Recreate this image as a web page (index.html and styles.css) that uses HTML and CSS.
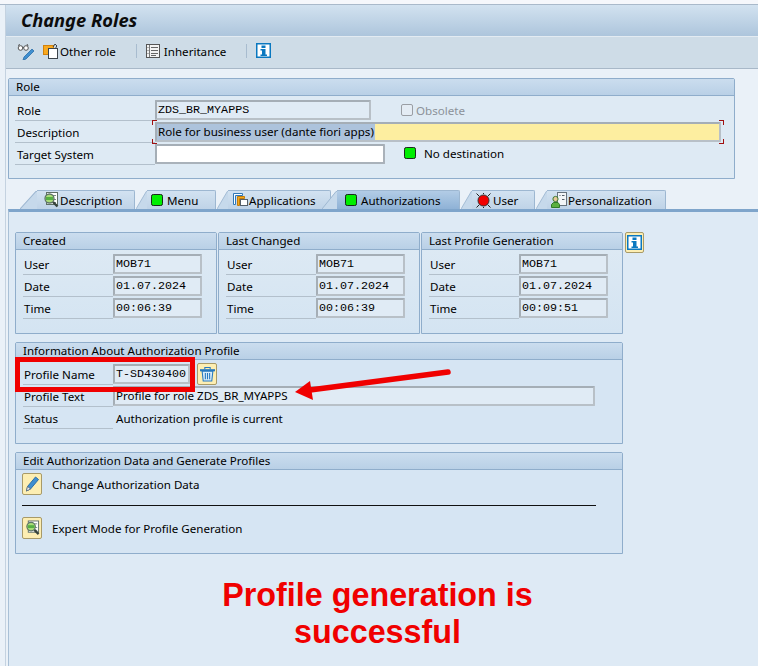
FILE: index.html
```html
<!DOCTYPE html>
<html lang="en">
<head>
	<meta charset="utf-8">
	<title>Change Roles</title>
	<link rel="stylesheet" href="styles.css">
</head>
<body>
<svg class="defs" width="0" height="0">
	<symbol id="i-info" viewBox="0 0 15 15">
		<rect x="0.750" y="0.750" width="13.500" height="13.500" fill="#fff" stroke="#0a78c0" stroke-width="1.500"/>
		<rect x="5.500" y="2.500" width="4" height="2.500" fill="#0a78c0"/>
		<path d="M4.500 6h5v5.500h1.500v1.500h-6.500v-1.500h1.500v-4h-1.500z" fill="#0a78c0"/>
	</symbol>
	<symbol id="i-led-green" viewBox="0 0 13 13">
		<rect x="0.500" y="0.500" width="12" height="12" rx="2" fill="#00ee00" stroke="#111"/>
	</symbol>
	<symbol id="i-led-red" viewBox="0 0 15 15">
		<path d="M0.500 0.500l3 3M14.500 0.500l-3 3M0.500 14.500l3-3M14.500 14.500l-3-3M7.500 0v1M7.500 14v1" stroke="#222" fill="none"/>
		<circle cx="7.500" cy="7.500" r="5.500" fill="#f00000" stroke="#333"/>
	</symbol>
	<symbol id="i-search-doc" viewBox="0 0 16 16">
		<rect x="3.500" y="0.500" width="11" height="12" fill="#fff" stroke="#5d6f66"/>
		<path d="M5 7.500h8M10 3.500h3M11 10.500h2" stroke="#7b8d84"/>
		<circle cx="6.500" cy="6.500" r="4.500" fill="#a8dc78" stroke="#5e7466" stroke-width="1.300"/>
		<rect x="3" y="5" width="7" height="3" fill="#55b043"/>
		<path d="M10 10l4.500 4.500" stroke="#37443d" stroke-width="2.400"/>
	</symbol>
	<symbol id="i-apps" viewBox="0 0 16 16">
		<path d="M1.500 1.500h9v2h-7v9h-2z" fill="#fff" stroke="#2f78b8"/>
		<path d="M5.500 4.500h7v2h-5v7h-2z" fill="#f5a81c" stroke="#c07c0c"/>
		<rect x="8.500" y="7.500" width="7" height="6" fill="#fff" stroke="#55606a"/>
	</symbol>
	<symbol id="i-person" viewBox="0 0 16 16">
		<rect x="6.500" y="0.500" width="9" height="13" fill="#f2f5f7" stroke="#66727c"/>
		<path d="M11 3.500h2.500M11 7.500h2.500M8.500 3.500h1" stroke="#55606a"/>
		<circle cx="4.500" cy="7" r="2.600" fill="#e8c99a" stroke="#3d7a2e"/>
		<path d="M0.500 15.500v-3l2-2h4.500l1.500 2v3z" fill="#5bb03f" stroke="#2f7a26"/>
	</symbol>
	<symbol id="i-glasses" viewBox="0 0 18 17">
		<circle cx="3.500" cy="5" r="2.300" fill="#fff" stroke="#555"/>
		<circle cx="9" cy="5" r="2.300" fill="#fff" stroke="#555"/>
		<path d="M1.500 3l1-2M11 3l-1-2M5.800 4.500h1" stroke="#555" fill="none"/>
		<path d="M7 14l8-8 2 2-8 8-3 1z" fill="#3f8fd0" stroke="#2c6ea8" stroke-width="0.800"/>
	</symbol>
	<symbol id="i-other" viewBox="0 0 16 16">
		<rect x="0.500" y="2.500" width="10" height="9" fill="#f9a91e" stroke="#d2820c"/>
		<rect x="5.500" y="5.500" width="9" height="10" fill="#fff" stroke="#3c444b"/>
		<path d="M10 4l2-3 2 2-1 1v2" fill="none" stroke="#3c444b"/>
	</symbol>
	<symbol id="i-list" viewBox="0 0 14 14">
		<rect x="0.500" y="0.500" width="13" height="13" fill="#f3f3f3" stroke="#555"/>
		<path d="M3.500 1v12" stroke="#777"/>
		<path d="M1.500 3.500h1M1.500 6.500h1M1.500 9.500h1M5 3.500h7M5 6.500h7M5 9.500h7M5 11.500h5" stroke="#666"/>
	</symbol>
	<symbol id="i-trash" viewBox="0 0 14 14">
		<path d="M0 3.500h14" stroke="#2679bf" stroke-width="2"/>
		<path d="M4.500 2.500v-1.500h5v1.500" fill="none" stroke="#2679bf"/>
		<path d="M2 4.500l1 9h8l1-9z" fill="#d8ecf8" stroke="#2679bf"/>
		<path d="M5 6v6M7 6v6M9 6v6" stroke="#2679bf"/>
	</symbol>
	<symbol id="i-pencil" viewBox="0 0 14 16">
		<path d="M1 15l1-4.500 8-9.500 3 2.500-8 9.500z" fill="#3f8fd0" stroke="#2c6ea8"/>
		<path d="M1 15l1-4.500 3 2.500z" fill="#e9edf0" stroke="#555" stroke-width="0.600"/>
	</symbol>
	<symbol id="slant" viewBox="0 0 16 18" preserveAspectRatio="none">
		<path d="M0 18L15 0h1v18z" class="slant-fill"/>
		<path d="M0 18L15 0.500h1" fill="none" stroke="#9db7d1"/>
	</symbol>
</svg>

<div class="top-strip"></div>
<div class="screen">
	<div class="title-bar">Change Roles</div>

	<div class="toolbar">
		<svg class="icon tb-glasses"><use href="#i-glasses"/></svg>
		<svg class="icon tb-other"><use href="#i-other"/></svg>
		<span class="tb-text">Other role</span>
		<span class="tb-sep"></span>
		<svg class="icon tb-list"><use href="#i-list"/></svg>
		<span class="tb-text">Inheritance</span>
		<span class="tb-sep"></span>
		<svg class="icon tb-info"><use href="#i-info"/></svg>
	</div>

	<div class="group role-group">
		<div class="group-head">Role</div>
		<div class="group-body">
			<div class="row">
				<span class="label">Role</span>
				<span class="field mono role-field">ZDS_BR_MYAPPS</span>
				<span class="checkbox"></span>
				<span class="muted">Obsolete</span>
			</div>
			<div class="row">
				<span class="label">Description</span>
				<span class="field desc-field"><span class="selected">Role for business user (dante fiori apps)</span></span>
			</div>
			<div class="row">
				<span class="label">Target System</span>
				<span class="field target-field"></span>
				<svg class="icon led"><use href="#i-led-green"/></svg>
				<span class="dest">No destination</span>
			</div>
		</div>
	</div>

	<div class="tabs">
		<div class="tab tab-first"><svg class="slant"><use href="#slant"/></svg><div class="tab-body t-desc"><svg class="icon tab-icon"><use href="#i-search-doc"/></svg>Description</div></div>
		<div class="tab"><svg class="slant"><use href="#slant"/></svg><div class="tab-body t-menu"><svg class="icon tab-led"><use href="#i-led-green"/></svg>Menu</div></div>
		<div class="tab"><svg class="slant"><use href="#slant"/></svg><div class="tab-body t-apps"><svg class="icon tab-icon"><use href="#i-apps"/></svg>Applications</div></div>
		<div class="tab active"><svg class="slant"><use href="#slant"/></svg><div class="tab-body t-auth"><svg class="icon tab-led"><use href="#i-led-green"/></svg>Authorizations</div></div>
		<div class="tab"><svg class="slant"><use href="#slant"/></svg><div class="tab-body t-user"><svg class="icon tab-red"><use href="#i-led-red"/></svg>User</div></div>
		<div class="tab"><svg class="slant"><use href="#slant"/></svg><div class="tab-body t-pers"><svg class="icon tab-icon"><use href="#i-person"/></svg>Personalization</div></div>
	</div>

	<div class="tab-panel">
		<div class="stamp-row">
			<div class="group stamp">
				<div class="group-head">Created</div>
				<div class="group-body">
					<div class="row"><span class="label">User</span><span class="field mono short">MOB71</span></div>
					<div class="row"><span class="label">Date</span><span class="field mono short">01.07.2024</span></div>
					<div class="row"><span class="label">Time</span><span class="field mono short">00:06:39</span></div>
				</div>
			</div>
			<div class="group stamp">
				<div class="group-head">Last Changed</div>
				<div class="group-body">
					<div class="row"><span class="label">User</span><span class="field mono short">MOB71</span></div>
					<div class="row"><span class="label">Date</span><span class="field mono short">01.07.2024</span></div>
					<div class="row"><span class="label">Time</span><span class="field mono short">00:06:39</span></div>
				</div>
			</div>
			<div class="group stamp">
				<div class="group-head">Last Profile Generation</div>
				<div class="group-body">
					<div class="row"><span class="label">User</span><span class="field mono short">MOB71</span></div>
					<div class="row"><span class="label">Date</span><span class="field mono short">01.07.2024</span></div>
					<div class="row"><span class="label">Time</span><span class="field mono short">00:09:51</span></div>
				</div>
			</div>
			<span class="btn info-btn"><svg class="icon btn-info-icon"><use href="#i-info"/></svg></span>
		</div>

		<div class="group wide info-group">
			<div class="group-head">Information About Authorization Profile</div>
			<div class="group-body">
				<div class="row">
					<span class="label">Profile Name</span>
					<span class="field mono name-field">T-SD430400</span>
					<span class="btn trash-btn"><svg class="icon btn-icon"><use href="#i-trash"/></svg></span>
				</div>
				<div class="row"><span class="label">Profile Text</span><span class="field text-field">Profile for role ZDS_BR_MYAPPS</span></div>
				<div class="row"><span class="label">Status</span><span class="plain">Authorization profile is current</span></div>
			</div>
		</div>

		<div class="group wide edit-group">
			<div class="group-head">Edit Authorization Data and Generate Profiles</div>
			<div class="action first-action">
				<span class="btn"><svg class="icon btn-icon"><use href="#i-pencil"/></svg></span>
				<span class="action-text">Change Authorization Data</span>
			</div>
			<div class="rule"></div>
			<div class="action">
				<span class="btn"><svg class="icon btn-icon"><use href="#i-search-doc"/></svg></span>
				<span class="action-text">Expert Mode for Profile Generation</span>
			</div>
		</div>

		<div class="note">Profile generation is<br>successful</div>
	</div>
</div>

<!-- annotations drawn over the screen -->
<span class="corner c-tl"></span><span class="corner c-bl"></span><span class="corner c-tr"></span><span class="corner c-br"></span>
<div class="red-box"></div>
<svg class="arrow" width="170" height="40" viewBox="0 0 170 40">
	<path d="M156 7L18 25" stroke="#f00000" stroke-width="5.500" stroke-linecap="round"/>
	<path d="M3 27L18 16L21 35z" fill="#f00000"/>
</svg>
</body>
</html>
```

FILE: styles.css
```css
* {
	box-sizing: border-box;
}
html, body {
	margin: 0;
	height: 100%;
}
body {
	width: 758px;
	height: 666px;
	overflow: hidden;
	position: relative;
	background: #eaf1f8;
	color: #000;
	font: 11.6px "Noto Sans", "Liberation Sans", sans-serif;
}
.defs {
	position: absolute;
}
.icon {
	display: block;
	flex: none;
}
.mono {
	font-family: "Liberation Mono", monospace;
	font-size: 11.7px;
}

.top-strip {
	height: 5px;
	background: #f5f7fb;
	border-bottom: 1px solid #a9b9ca;
}
.screen {
	margin-left: 5px;
	border-left: 1px solid #c4d2e0;
}
.title-bar {
	height: 31px;
	padding: 0 0 3px 15px;
	display: flex;
	align-items: center;
	background: linear-gradient(#d2e2f0, #adc5dc);
	font: italic bold 18.300px "Noto Sans", "Liberation Sans", sans-serif;
	color: #0c0c0c;
}
.toolbar {
	height: 33px;
	display: flex;
	align-items: center;
	padding: 0 0 3px 11px;
	background: #cedce7;
	border-top: 1px solid #e3ebf2;
	border-bottom: 1px solid #a8b8c8;
}
.tb-glasses {
	width: 18px;
	height: 17px;
}
.tb-other {
	width: 16px;
	height: 16px;
	margin-left: 8px;
}
.tb-text {
	margin-left: 1px;
}
.tb-sep {
	width: 1px;
	height: 14px;
	background: #a8bccf;
	margin: 0 9px 0 20px;
}
.tb-list {
	width: 14px;
	height: 14px;
	margin-right: 3px;
}
.tb-info {
	width: 15px;
	height: 15px;
	margin-top: -2px;
}

.group {
	background: #deeaf4;
	border: 1px solid #8fadcb;
	border-radius: 2px 2px 0 0;
}
.group-head {
	height: 17px;
	padding-left: 7px;
	line-height: 16px;
	background: linear-gradient(#cbddee, #b9d0e6);
	border-bottom: 1px solid #8fadcb;
	white-space: nowrap;
}
.row {
	height: 22px;
	display: flex;
	align-items: flex-start;
}
.label {
	border-bottom: 1px solid #b3c0cc;
	height: 21px;
	line-height: 21px;
	flex: none;
}
.field {
	height: 20px;
	flex: none;
	padding-left: 1px;
	line-height: 16px;
	white-space: nowrap;
	background: #e0ebf5;
	border: 2px solid #a5aeb6;
	border-right-color: #b8c0c7;
	border-bottom-color: #b8c0c7;
	border-radius: 1px;
}

.role-group {
	width: 727px;
	height: 101px;
	margin: 9px 0 0 2px;
}
.role-group .group-body {
	padding: 4px 0 0 6px;
}
.role-group .label {
	width: 140px;
	padding-left: 2px;
}
.role-field {
	width: 216px;
}
.checkbox {
	width: 12px;
	height: 12px;
	margin: 4px 3px 0 30px;
	border: 1px solid #9a9ea4;
	border-radius: 2px;
	background: #e4ecf4;
}
.muted {
	color: #8c9299;
	line-height: 21px;
}
.desc-field {
	width: 566px;
	background: #fdeea0;
	padding-left: 0;
}
.selected {
	background: #adc3dc;
	display: inline-block;
	padding: 0 1px;
}
.target-field {
	width: 230px;
	background: #fff;
	border-right-color: #aab2ba;
	border-bottom-color: #aab2ba;
}
.led {
	width: 12px;
	height: 12px;
	margin: 3px 8px 0 19px;
}
.dest {
	line-height: 20px;
}

.tabs {
	display: flex;
	height: 19px;
	margin: 11px 0 0 14px;
}
.tab {
	display: flex;
	height: 19px;
	margin-right: 1px;
}
.slant {
	width: 11px;
	height: 18px;
	margin-top: 1px;
	flex: none;
}
.tab-first .slant {
	width: 17px;
}
.slant-fill {
	fill: #c6d9eb;
}
.tab-body {
	display: flex;
	align-items: center;
	height: 19px;
	padding-left: 4px;
	background: linear-gradient(#d2e2f1, #bfd3e7);
	border-top: 1px solid #9db7d1;
	border-right: 1px solid #9db7d1;
	border-radius: 0 2px 0 0;
	white-space: nowrap;
}
.t-desc {
	width: 98px;
	padding-left: 6px;
}
.t-menu {
	width: 69px;
}
.t-apps {
	width: 103px;
}
.t-auth {
	width: 123px;
	padding-left: 8px;
}
.t-user {
	width: 63px;
}
.t-pers {
	width: 119px;
}
.active {
	margin-left: -10px;
	position: relative;
}
.active .slant {
	width: 15px;
}
.active .slant-fill {
	fill: #a4c1de;
}
.active .tab-body {
	background: linear-gradient(#b2cce6, #8fb2d6);
}
.tab-icon {
	width: 16px;
	height: 16px;
	margin-right: 1px;
}
.tab-led {
	width: 12px;
	height: 12px;
	margin-right: 4px;
}
.tab-red {
	width: 15px;
	height: 15px;
	margin-right: 2px;
}

.tab-panel {
	margin-left: 2px;
	height: 458px;
	padding: 20px 0 0 6px;
	background: #deeaf5;
	border-top: 3px solid #7fa5cb;
	border-left: 1px solid #a9c0d6;
}
.stamp-row {
	display: flex;
	align-items: flex-start;
	gap: 1px;
}
.stamp {
	width: 202px;
	height: 102px;
	background: linear-gradient(#deeaf4, #d4e4f2);
}
.stamp .group-body, .info-group .group-body {
	padding: 4px 0 0 7px;
}
.stamp .label, .info-group .label {
	width: 90px;
	padding-left: 1px;
}
.short {
	width: 89px;
}
.btn {
	width: 20px;
	height: 22px;
	display: flex;
	align-items: center;
	justify-content: center;
	flex: none;
	background: #fdeeb2;
	border: 1px solid #a89a68;
	border-radius: 2px;
}
.info-btn {
	width: 19px;
	height: 21px;
	margin-left: 1px;
}
.btn-info-icon {
	width: 15px;
	height: 15px;
}
.btn-icon {
	width: 15px;
	height: 16px;
}
.wide {
	width: 608px;
	background: #d6e5f3;
}
.info-group {
	height: 102px;
	margin-top: 8px;
}
.name-field {
	width: 77px;
}
.trash-btn {
	margin: -1px 0 0 7px;
}
.text-field {
	width: 482px;
}
.plain {
	line-height: 21px;
	padding-left: 3px;
}
.edit-group {
	height: 102px;
	margin-top: 8px;
}
.action {
	height: 22px;
	display: flex;
	align-items: center;
	padding-left: 6px;
}
.first-action {
	margin-top: 3px;
}
.action-text {
	margin-left: 10px;
}
.rule {
	height: 1px;
	width: 574px;
	margin: 10px 0 11px 6px;
	background: #111;
}
.note {
	margin-top: 23px;
	padding-right: 18px;
	text-align: center;
	color: #f00000;
	font: bold 32.300px/37px "Liberation Sans", sans-serif;
}

/* overlays */
.corner {
	position: absolute;
	width: 5px;
	height: 5px;
	border: 0 solid #a01010;
}
.c-tl { left: 152px; top: 120px; border-width: 1px 0 0 1px; }
.c-bl { left: 152px; top: 139px; border-width: 0 0 1px 1px; }
.c-tr { left: 719px; top: 120px; border-width: 1px 1px 0 0; }
.c-br { left: 719px; top: 139px; border-width: 0 1px 1px 0; }
.red-box {
	position: absolute;
	left: 15px;
	top: 357px;
	width: 180px;
	height: 35px;
	border: 5px solid #f00000;
}
.arrow {
	position: absolute;
	left: 292px;
	top: 365px;
}
```
